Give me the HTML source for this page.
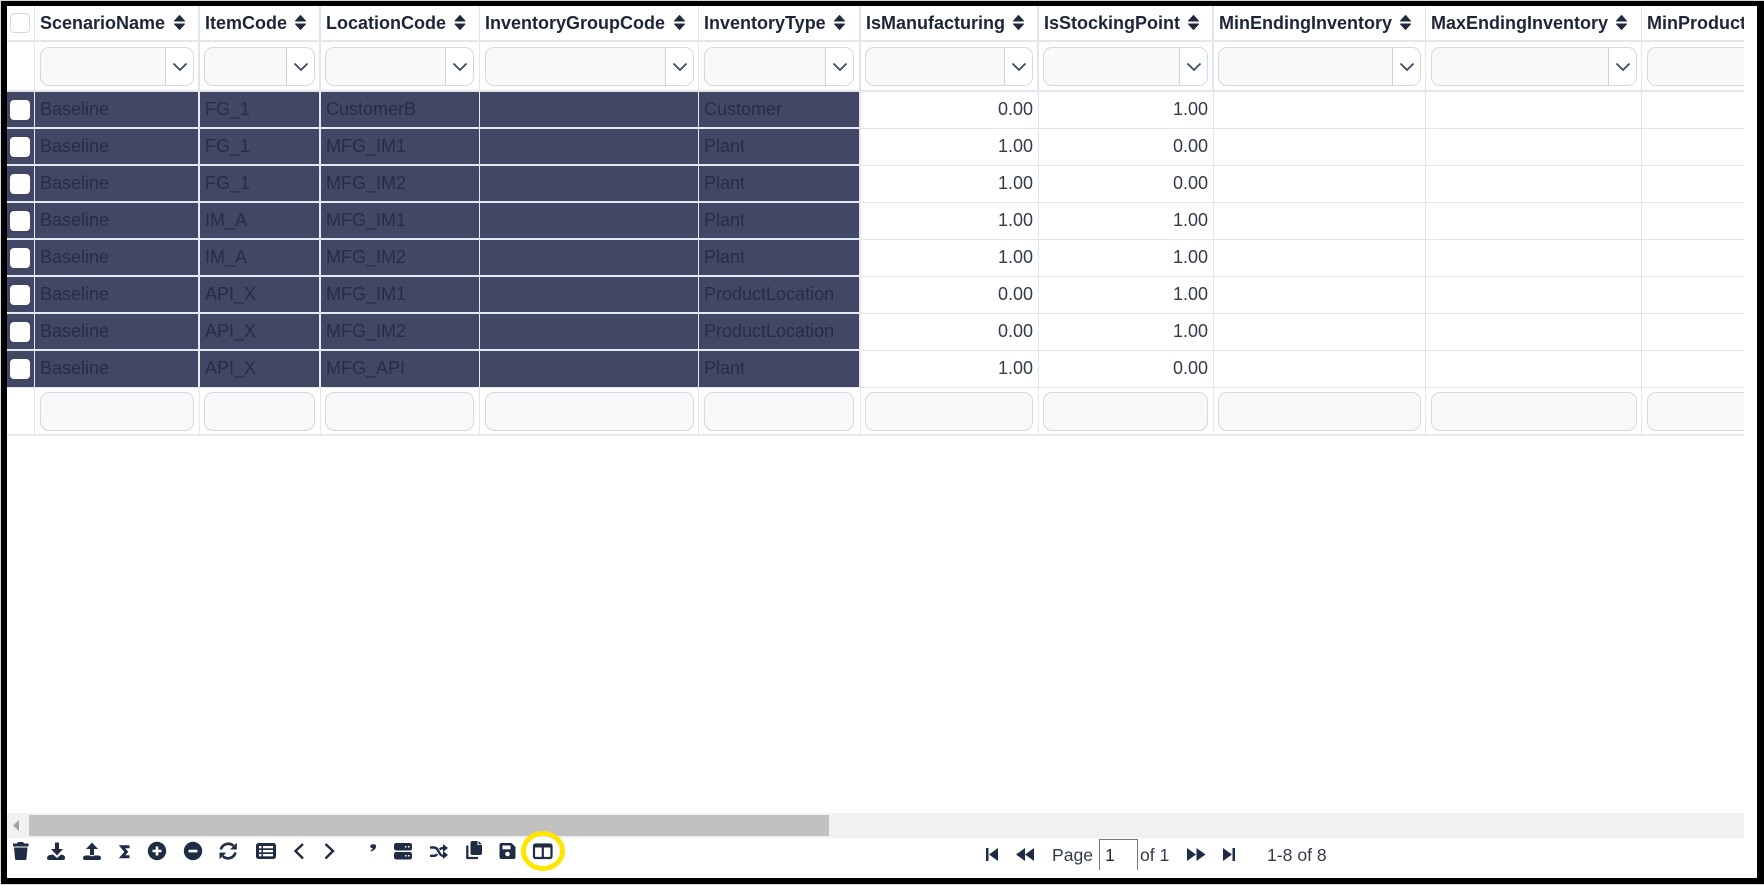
<!DOCTYPE html>
<html><head><meta charset="utf-8"><title>Grid</title>
<style>
html,body{margin:0;padding:0;width:1764px;height:885px;overflow:hidden;background:#d8d8d8;font-family:"Liberation Sans",sans-serif}
#frame{position:absolute;left:1px;top:1px;width:1763px;height:883px;background:#000}
#page{position:absolute;left:7px;top:6px;width:1750px;height:872px;background:#fff}
#clip{position:absolute;left:7px;top:6px;width:1737px;height:807px;overflow:hidden;background:#fff}
table{border-collapse:separate;border-spacing:0;table-layout:fixed;width:1793px;color:#1f2a3d}
td,th{box-sizing:border-box;padding:0 5px;border-right:1px solid #e2e5eb;border-bottom:1px solid #e2e5eb;white-space:nowrap;overflow:hidden;text-align:left;font-weight:400}
th{height:36px;font-size:18px;font-weight:700;color:#1c2638;border-bottom:2px solid #e2e7ee;position:relative;padding-left:5px;padding-top:0;vertical-align:middle}
.b{border-right:2px solid #dce7f4}
.f td{height:50px;vertical-align:top;padding-top:5px;border-bottom:2px solid #e2e5eb}
.r td{height:37px;font-size:18px;color:#333b4b;padding-left:5px;vertical-align:middle;padding-bottom:0}
.r td.n{text-align:right;padding-right:5px;padding-bottom:2px}
.r td.n.b{border-right:1px solid #e2e5eb}
.r td.s{background:#434766;color:#252e45;border-bottom:2px solid #e4e9f3;border-right-color:#e4e9f3}
.r:nth-child(10) td.s{border-bottom-width:1px;padding-bottom:1px}
.t td{height:48px;vertical-align:top;padding-top:4px;border-bottom:2px solid #e6e8ed}
.t td.b{border-right:1px solid #e6e8ed;padding-right:6px}
.sel{box-sizing:border-box;height:39px;border:1px solid #d6d8de;border-radius:9px;background:#f8f9fb;position:relative;overflow:hidden}
.l{margin-left:-1px}
.e{margin-right:-1px}
.sel u{position:absolute;right:0;top:0;bottom:0;width:27px;background:#fff;border-left:1px solid #cfd2d9}
.sel svg{position:absolute;left:6px;top:14px}
.cb{box-sizing:border-box;position:absolute;left:10px;width:20px;height:20px;border-radius:4px;background:#fff}
.pt{position:absolute;font-size:17.6px;line-height:20px;color:#333b4b;top:845px}
#pg{position:absolute;left:1099px;top:839px;width:39px;height:31px;box-sizing:border-box;border:1px solid #777;border-bottom:0;font-size:17.6px;line-height:30px;padding-left:5px;color:#1f2a3d}
#ov{position:absolute;left:0;top:0}
</style></head><body>
<div id="frame"></div><div id="page"></div>
<div id="clip">
<table>
<colgroup><col style="width:28px"><col style="width:165px"><col style="width:121px"><col style="width:159px"><col style="width:219px"><col style="width:162px"><col style="width:178px"><col style="width:175px"><col style="width:212px"><col style="width:216px"><col style="width:158px"></colgroup>
<tr>
<th></th>
<th class="b">ScenarioName</th>
<th class="b">ItemCode</th>
<th>LocationCode</th>
<th>InventoryGroupCode</th>
<th class="b">InventoryType</th>
<th class="b">IsManufacturing</th>
<th class="b">IsStockingPoint</th>
<th>MinEndingInventory</th>
<th>MaxEndingInventory</th>
<th>MinProductionLotSize</th>
</tr>
<tr class="f">
<td></td>
<td class="b"><div class="sel e"><u><svg width="16" height="10" viewBox="0 0 16 10"><path d="M1.5 1.5L8 8l6.500-6.500" fill="none" stroke="#3d4a5f" stroke-width="1.800"/></svg></u></div></td>
<td class="b"><div class="sel l e"><u><svg width="16" height="10" viewBox="0 0 16 10"><path d="M1.5 1.5L8 8l6.500-6.500" fill="none" stroke="#3d4a5f" stroke-width="1.800"/></svg></u></div></td>
<td><div class="sel l"><u><svg width="16" height="10" viewBox="0 0 16 10"><path d="M1.5 1.5L8 8l6.500-6.500" fill="none" stroke="#3d4a5f" stroke-width="1.800"/></svg></u></div></td>
<td><div class="sel e"><u><svg width="16" height="10" viewBox="0 0 16 10"><path d="M1.5 1.5L8 8l6.500-6.500" fill="none" stroke="#3d4a5f" stroke-width="1.800"/></svg></u></div></td>
<td class="b"><div class="sel"><u><svg width="16" height="10" viewBox="0 0 16 10"><path d="M1.5 1.5L8 8l6.500-6.500" fill="none" stroke="#3d4a5f" stroke-width="1.800"/></svg></u></div></td>
<td class="b"><div class="sel l e"><u><svg width="16" height="10" viewBox="0 0 16 10"><path d="M1.5 1.5L8 8l6.500-6.500" fill="none" stroke="#3d4a5f" stroke-width="1.800"/></svg></u></div></td>
<td class="b"><div class="sel l e"><u><svg width="16" height="10" viewBox="0 0 16 10"><path d="M1.5 1.5L8 8l6.500-6.500" fill="none" stroke="#3d4a5f" stroke-width="1.800"/></svg></u></div></td>
<td><div class="sel l e"><u><svg width="16" height="10" viewBox="0 0 16 10"><path d="M1.5 1.5L8 8l6.500-6.500" fill="none" stroke="#3d4a5f" stroke-width="1.800"/></svg></u></div></td>
<td><div class="sel e"><u><svg width="16" height="10" viewBox="0 0 16 10"><path d="M1.5 1.5L8 8l6.500-6.500" fill="none" stroke="#3d4a5f" stroke-width="1.800"/></svg></u></div></td>
<td><div class="sel"></div></td>
</tr>
<tr class="r"><td class="s"></td><td class="s b">Baseline</td><td class="s b">FG_1</td><td class="s">CustomerB</td><td class="s"></td><td class="s b">Customer</td><td class="n b">0.00</td><td class="n b">1.00</td><td></td><td></td><td></td></tr>
<tr class="r"><td class="s"></td><td class="s b">Baseline</td><td class="s b">FG_1</td><td class="s">MFG_IM1</td><td class="s"></td><td class="s b">Plant</td><td class="n b">1.00</td><td class="n b">0.00</td><td></td><td></td><td></td></tr>
<tr class="r"><td class="s"></td><td class="s b">Baseline</td><td class="s b">FG_1</td><td class="s">MFG_IM2</td><td class="s"></td><td class="s b">Plant</td><td class="n b">1.00</td><td class="n b">0.00</td><td></td><td></td><td></td></tr>
<tr class="r"><td class="s"></td><td class="s b">Baseline</td><td class="s b">IM_A</td><td class="s">MFG_IM1</td><td class="s"></td><td class="s b">Plant</td><td class="n b">1.00</td><td class="n b">1.00</td><td></td><td></td><td></td></tr>
<tr class="r"><td class="s"></td><td class="s b">Baseline</td><td class="s b">IM_A</td><td class="s">MFG_IM2</td><td class="s"></td><td class="s b">Plant</td><td class="n b">1.00</td><td class="n b">1.00</td><td></td><td></td><td></td></tr>
<tr class="r"><td class="s"></td><td class="s b">Baseline</td><td class="s b">API_X</td><td class="s">MFG_IM1</td><td class="s"></td><td class="s b">ProductLocation</td><td class="n b">0.00</td><td class="n b">1.00</td><td></td><td></td><td></td></tr>
<tr class="r"><td class="s"></td><td class="s b">Baseline</td><td class="s b">API_X</td><td class="s">MFG_IM2</td><td class="s"></td><td class="s b">ProductLocation</td><td class="n b">0.00</td><td class="n b">1.00</td><td></td><td></td><td></td></tr>
<tr class="r"><td class="s"></td><td class="s b">Baseline</td><td class="s b">API_X</td><td class="s">MFG_API</td><td class="s"></td><td class="s b">Plant</td><td class="n b">1.00</td><td class="n b">0.00</td><td></td><td></td><td></td></tr>
<tr class="t">
<td></td>
<td class="b"><div class="sel e"></div></td>
<td class="b"><div class="sel l e"></div></td>
<td><div class="sel l"></div></td>
<td><div class="sel e"></div></td>
<td class="b"><div class="sel"></div></td>
<td class="b"><div class="sel l e"></div></td>
<td class="b"><div class="sel l e"></div></td>
<td><div class="sel l e"></div></td>
<td><div class="sel e"></div></td>
<td><div class="sel"></div></td>
</tr>
</table>
</div>

<div class="cb" style="top:13px;border:1px solid #d6d8dd"></div>
<div class="cb" style="top:100px"></div>
<div class="cb" style="top:137px"></div>
<div class="cb" style="top:174px"></div>
<div class="cb" style="top:211px"></div>
<div class="cb" style="top:248px"></div>
<div class="cb" style="top:285px"></div>
<div class="cb" style="top:322px"></div>
<div class="cb" style="top:359px"></div>

<div class="pt" style="left:1052px">Page</div>
<div id="pg">1</div>
<div class="pt" style="left:1140px">of 1</div>
<div class="pt" style="left:1267px">1-8 of 8</div>

<svg id="ov" width="1764" height="885" viewBox="0 0 1764 885">
<defs>
<path id="so" d="M1 6.500L6 1 11 6.500ZM1 9.500L6 15 11 9.500Z" fill="#1f2a3d" stroke="#1f2a3d" stroke-width="1" stroke-linejoin="round"/>
</defs>
<use href="#so" x="173.500" y="14.500"/>
<use href="#so" x="294.500" y="14.500"/>
<use href="#so" x="454" y="14.500"/>
<use href="#so" x="673.500" y="14.500"/>
<use href="#so" x="833.500" y="14.500"/>
<use href="#so" x="1012.500" y="14.500"/>
<use href="#so" x="1187.500" y="14.500"/>
<use href="#so" x="1399.500" y="14.500"/>
<use href="#so" x="1615.500" y="14.500"/>

<!-- scrollbar -->
<rect x="7" y="813" width="1737" height="25" fill="#f1f1f1"/>
<rect x="29" y="815" width="800" height="21" fill="#c1c1c1"/>
<path d="M19 820V831L13 825.500Z" fill="#a3a3a3"/>

<g fill="#1f2d44">
<!-- trash -->
<path d="M17 843.500L18 842H23L24 843.500H28.500V846.500H13V843.500ZM14 847.500H27.500L26.500 858.500Q26.500 860 25 860H16.500Q15 860 15 858.500Z"/>
<!-- download -->
<path d="M55 842.500H59V849H63L57 855.500 51 849H55ZM47 858.500Q47 855.500 50 855L53 854.500 57 858 61 854.500 63 855Q65 855.500 65 858Q65 860 63 860H49Q47 860 47 858.500Z"/>
<!-- upload -->
<path d="M92 842.500L98 849H94V855H90V849H86ZM83 858Q83 855.500 86 855.500H90Q92 857 94 855.500H98Q101 855.500 101 858Q101 860 99 860H85Q83 860 83 858Z"/>
<!-- plus / minus -->
<circle cx="157" cy="851" r="9.200"/><path d="M155.700 846.500H158.300V849.700H161.500V852.300H158.300V855.500H155.700V852.300H152.500V849.700H155.700Z" fill="#fff"/>
<circle cx="193" cy="851" r="9.200"/><rect x="188.500" y="849.700" width="9" height="2.700" rx=".6" fill="#fff"/>
<!-- list -->
<rect x="256" y="843" width="20" height="16" rx="2.500"/>
<g fill="#fff"><rect x="259" y="846" width="2.500" height="2.300"/><rect x="263" y="846" width="10" height="2.300"/><rect x="259" y="850" width="2.500" height="2.300"/><rect x="263" y="850" width="10" height="2.300"/><rect x="259" y="854" width="2.500" height="2.300"/><rect x="263" y="854" width="10" height="2.300"/></g>
<!-- comma -->
<path d="M371.500 844.500Q376.500 843.500 376 847 375.500 850 371 851.500L370.500 850.300Q372.500 849.500 372.800 848.300 370 848 370.300 846 370.500 844.800 371.500 844.500Z"/>
<!-- server -->
<rect x="394" y="843" width="18" height="7.500" rx="2.200"/><rect x="394" y="852" width="18" height="7.500" rx="2.200"/>
<g fill="#fff"><rect x="405" y="846" width="1.500" height="1.500"/><rect x="408" y="846" width="1.500" height="1.500"/><rect x="405" y="855" width="1.500" height="1.500"/><rect x="408" y="855" width="1.500" height="1.500"/></g>
<!-- arrowheads on random -->
<path d="M443 844L448 848 443 852ZM443 851L448 855 443 859Z"/>
<!-- copy -->
<path d="M470.500 843Q470.500 841 472.500 841H477.500V845H482V853Q482 855 480 855H472.500Q470.500 855 470.500 853ZM478.500 841L482 844.200H478.500Z"/>
<path d="M467.300 845.500V858H478" fill="none" stroke="#1f2d44" stroke-width="2.300" stroke-linejoin="round"/>
<!-- save -->
<path d="M499.500 845Q499.500 843 501.500 843H511.500L515.500 847V857Q515.500 859 513.500 859H501.500Q499.500 859 499.500 857Z"/>
<rect x="502.500" y="845.500" width="8" height="3.800" fill="#fff"/><circle cx="507.500" cy="854" r="2.300" fill="#fff"/>
<!-- first / prev / next / last -->
<path d="M986 848H988.500V861H986ZM998 848V861L989 854.500Z"/>
<path d="M1025 848V861L1016 854.500ZM1034 848V861L1025 854.500Z"/>
<path d="M1187 848V861L1196 854.500ZM1196.500 848V861L1205.500 854.500Z"/>
<path d="M1223 848V861L1232 854.500ZM1232.500 848H1235V861H1232.500Z"/>
</g>
<g fill="none" stroke="#1f2d44">
<!-- sigma -->
<path d="M129.500 846.800H122L126.300 851.800 122 856.800H129.500" stroke-width="3"/>
<!-- sync -->
<path d="M220.800 849.500A7.800 7.800 0 0 1 233.500 845.800" stroke-width="2.700"/>
<path d="M235.500 852.500A7.800 7.800 0 0 1 222.800 856.300" stroke-width="2.700"/>
<path d="M236.800 842.800V849.500H230Z M219.500 859.300V852.600H226.300Z" fill="#1f2d44" stroke="none"/>
<!-- chevrons -->
<path d="M303 844L295.500 851 303 858.500" stroke-width="2.400"/>
<path d="M325.500 844L333 851 325.500 858.500" stroke-width="2.400"/>
<!-- random -->
<path d="M430 847.500H434Q436 847.500 437.500 849.500L440 854Q441.500 855.800 443 855.800H445M430 855.800H434Q436 855.800 437.200 854M439.800 849.500Q441.300 848 443 848H445" stroke-width="2.400"/>
<!-- columns -->
<rect x="534" y="844.500" width="17.500" height="13.500" rx="1.500" stroke-width="2.200"/>
<path d="M534 846H551.500" stroke-width="3"/><path d="M542.800 845V858" stroke-width="2.200"/>
</g>
<ellipse cx="543" cy="851" rx="19.500" ry="17.500" fill="none" stroke="#ffe600" stroke-width="5"/>
</svg>
</body></html>
